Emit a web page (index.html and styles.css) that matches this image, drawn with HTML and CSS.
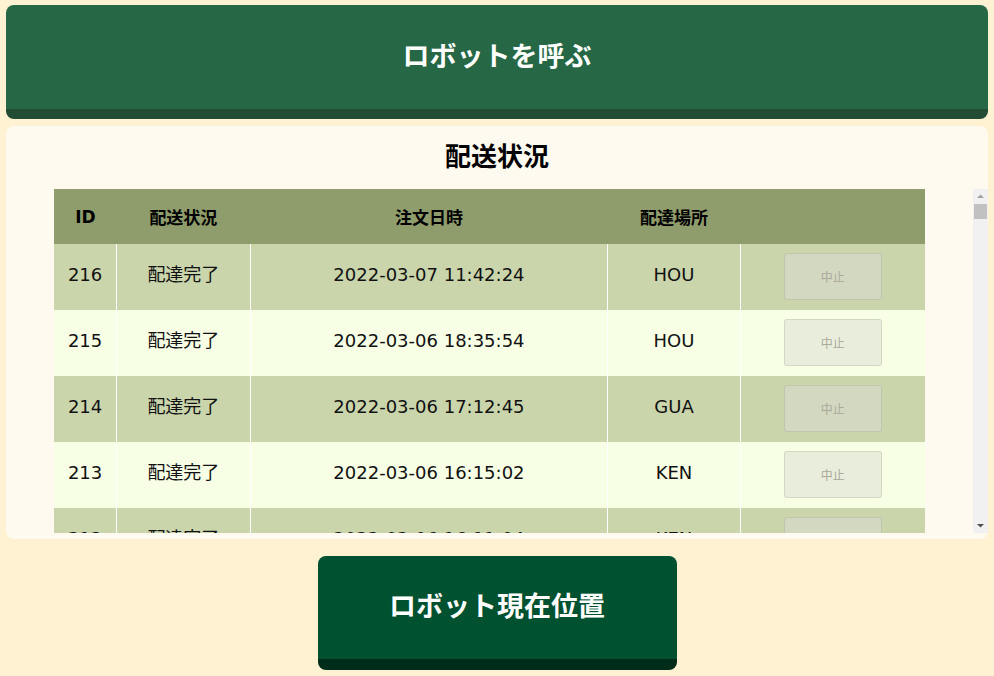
FILE: index.html
```html
<!DOCTYPE html>
<html lang="ja">
<head>
    <meta charset="UTF-8">
    <meta name="viewport" content="width=device-width, initial-scale=1.0">
    <title>配送状況</title>
    <link rel="stylesheet" href="styles.css">
</head>
<body>
    <button class="call-btn">ロボットを呼ぶ</button>

    <div class="status-card">
        <h2>配送状況</h2>
        <div class="table-wrap">
            <div class="table-scroll">
                <table class="order-table">
                    <colgroup>
                        <col class="col-id">
                        <col class="col-status">
                        <col class="col-date">
                        <col class="col-place">
                        <col class="col-action">
                    </colgroup>
                    <thead>
                        <tr>
                            <th>ID</th>
                            <th>配送状況</th>
                            <th>注文日時</th>
                            <th>配達場所</th>
                            <th></th>
                        </tr>
                    </thead>
                    <tbody>
                        <tr>
                            <td>216</td>
                            <td>配達完了</td>
                            <td>2022-03-07 11:42:24</td>
                            <td>HOU</td>
                            <td><button class="cancel-btn" disabled>中止</button></td>
                        </tr>
                        <tr>
                            <td>215</td>
                            <td>配達完了</td>
                            <td>2022-03-06 18:35:54</td>
                            <td>HOU</td>
                            <td><button class="cancel-btn" disabled>中止</button></td>
                        </tr>
                        <tr>
                            <td>214</td>
                            <td>配達完了</td>
                            <td>2022-03-06 17:12:45</td>
                            <td>GUA</td>
                            <td><button class="cancel-btn" disabled>中止</button></td>
                        </tr>
                        <tr>
                            <td>213</td>
                            <td>配達完了</td>
                            <td>2022-03-06 16:15:02</td>
                            <td>KEN</td>
                            <td><button class="cancel-btn" disabled>中止</button></td>
                        </tr>
                        <tr>
                            <td>212</td>
                            <td>配達完了</td>
                            <td>2022-03-06 16:11:04</td>
                            <td>KEN</td>
                            <td><button class="cancel-btn" disabled>中止</button></td>
                        </tr>
                        <tr>
                            <td>211</td>
                            <td>配達完了</td>
                            <td>2022-03-06 15:58:37</td>
                            <td>HOU</td>
                            <td><button class="cancel-btn" disabled>中止</button></td>
                        </tr>
                        <tr>
                            <td>210</td>
                            <td>配達完了</td>
                            <td>2022-03-06 15:20:11</td>
                            <td>GUA</td>
                            <td><button class="cancel-btn" disabled>中止</button></td>
                        </tr>
                    </tbody>
                </table>
            </div>
            <div class="scroll-rail">
                <svg class="rail-arrow" width="15" height="15" viewBox="0 0 15 15">
                    <polygon points="4,9 7.5,5.5 11,9" fill="#a3a3a3"/>
                </svg>
                <div class="rail-thumb"></div>
                <div class="rail-space"></div>
                <svg class="rail-arrow" width="15" height="15" viewBox="0 0 15 15">
                    <polygon points="4,6 11,6 7.5,9.5" fill="#505050"/>
                </svg>
            </div>
        </div>
    </div>

    <button class="position-btn">ロボット現在位置</button>
</body>
</html>
```

FILE: styles.css
```css
body {
    font-family: "DejaVu Sans", "Noto Sans CJK JP", sans-serif;
    background: #fef2d3;
    color: #111;
    margin: 0;
    padding: 5px 6px;
}
.call-btn, .position-btn {
    display: block;
    box-sizing: border-box;
    height: 114px;
    padding: 0 0 6px;
    border: none;
    border-radius: 8px;
    color: #fff;
    font-family: inherit;
    font-size: 27px;
    font-weight: bold;
    cursor: pointer;
}
.call-btn {
    width: 100%;
    margin-bottom: 7px;
    background: #266746;
    border-bottom: 10px solid #234c35;
}
.position-btn {
    width: 359px;
    margin: 17px auto 0;
    background: #00512f;
    border-bottom: 11px solid #002d1a;
}
.status-card {
    background: #fffaef;
    border-radius: 8px;
    padding-bottom: 6px;
}
.status-card h2 {
    margin: 0;
    height: 63px;
    line-height: 63px;
    font-size: 26px;
    text-align: center;
    color: #000;
}
.table-wrap {
    display: flex;
    height: 344px;
}
.table-scroll {
    flex: 1;
    overflow-y: auto;
    scrollbar-width: none;
}
.scroll-rail {
    width: 15px;
    display: flex;
    flex-direction: column;
    background: #f1f1f1;
}
.rail-arrow {
    display: block;
    flex: none;
}
.rail-thumb {
    height: 15px;
    margin: 0 1px;
    background: #c1c1c1;
}
.rail-space {
    flex: 1;
}
.order-table {
    width: 90%;
    margin: 0 auto;
    border-collapse: collapse;
    table-layout: fixed;
}
.col-id { width: 62px; }
.col-status { width: 134px; }
.col-date { width: 357px; }
.col-place { width: 133px; }
.col-action { width: 184px; }
.order-table th {
    height: 55px;
    padding: 0;
    background: #8f9c6b;
    font-size: 17px;
    color: #000;
}
.order-table tbody tr {
    height: 66px;
}
.order-table td {
    padding: 0 0 4px;
    text-align: center;
    font-size: 18px;
    line-height: 22px;
}
.order-table td + td {
    border-left: 1px solid #fff;
}
.order-table tbody tr:nth-child(odd) { background: #cad5ac; }
.order-table tbody tr:nth-child(even) { background: #f7ffe5; }
.cancel-btn {
    width: 98px;
    height: 47px;
    margin-top: 2px;
    border: 1px solid rgba(110, 115, 90, 0.18);
    border-radius: 3px;
    background: rgba(220, 219, 212, 0.5);
    color: #aaa99c;
    font-family: inherit;
    font-size: 12px;
    vertical-align: middle;
}
```
